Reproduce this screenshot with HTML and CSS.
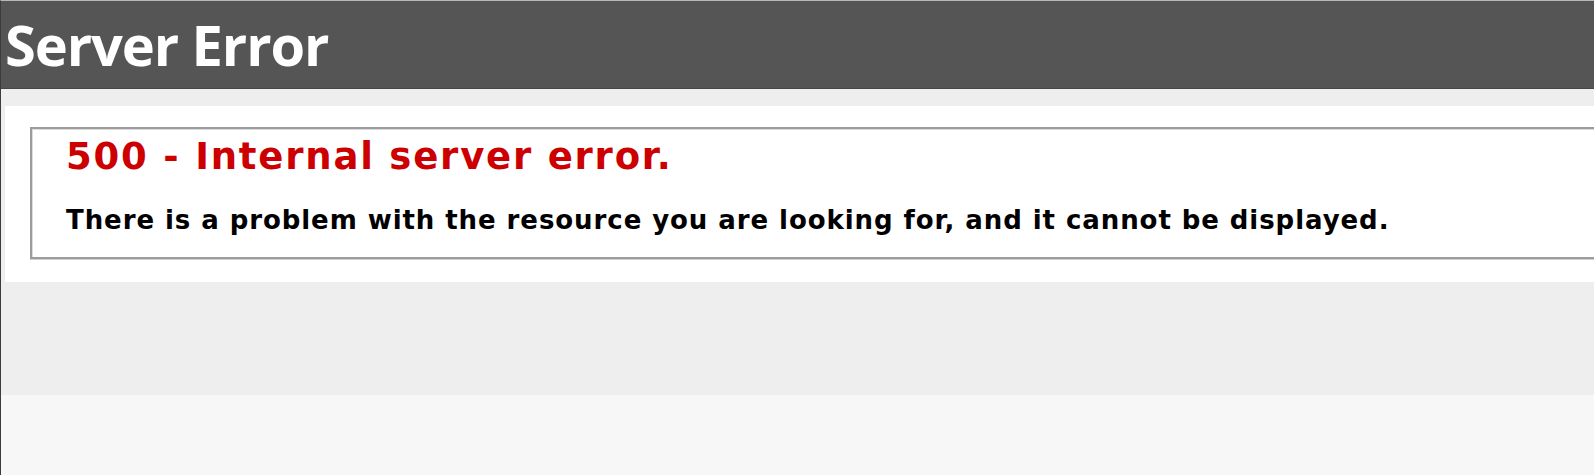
FILE: index.html
```html
<!DOCTYPE html>
<html lang="en">
<head>
<meta charset="utf-8">
<title>500 - Internal server error.</title>
<link rel="stylesheet" href="styles.css">
</head>
<body>
<div class="frame">
  <div class="page">
    <div class="header"><h1 class="title">Server Error</h1></div>
    <div class="content">
      <div class="content-container">
        <fieldset class="box">
          <h2 class="code">500 - Internal server error.</h2>
          <h3 class="message">There is a problem with the resource you are looking for, and it cannot be displayed.</h3>
        </fieldset>
      </div>
    </div>
  </div>
</div>
</body>
</html>
```

FILE: styles.css
```css
html, body {
  margin: 0;
  padding: 0;
  height: 100%;
  overflow: hidden;
  background: #f7f7f7;
}
.frame {
  box-sizing: border-box;
  min-height: 100vh;
  border-left: 1px solid #3c3c3c;
  border-top: 1px solid #b8b8b8;
  background: #f7f7f7;
}
.page {
  background: #eeeeee;
  height: 394px;
  overflow: hidden;
}
.header {
  background: #555555;
  height: 87px;
  border-bottom: 1px solid #474747;
  padding-left: 4px;
}
.title {
  margin: 0;
  font-family: "Open Sans", "DejaVu Sans", sans-serif;
  font-weight: 700;
  font-size: 56px;
  line-height: 87px;
  letter-spacing: -1.1px;
  color: #ffffff;
  white-space: nowrap;
}
.content {
  margin: 17px -60px 0 4px;
}
.content-container {
  background: #ffffff;
  padding: 21px 0 23px 25px;
}
.box {
  margin: 0 -60px 0 0;
  padding: 7px 0 22px 34px;
  border: 2px solid #9c9c9c;
  box-shadow: inset 1px 1px 0 #dcdcdc, 0 1px 0 #d0d0d0;
  font-family: "DejaVu Sans", Verdana, sans-serif;
}
.code {
  margin: 0;
  font-size: 37px;
  line-height: 42px;
  font-weight: 700;
  letter-spacing: 1.8px;
  color: #cc0000;
  white-space: nowrap;
}
.message {
  margin: 27px 0 0 0;
  font-size: 26px;
  line-height: 30px;
  font-weight: 700;
  letter-spacing: 0.93px;
  color: #000000;
  white-space: nowrap;
}
```
